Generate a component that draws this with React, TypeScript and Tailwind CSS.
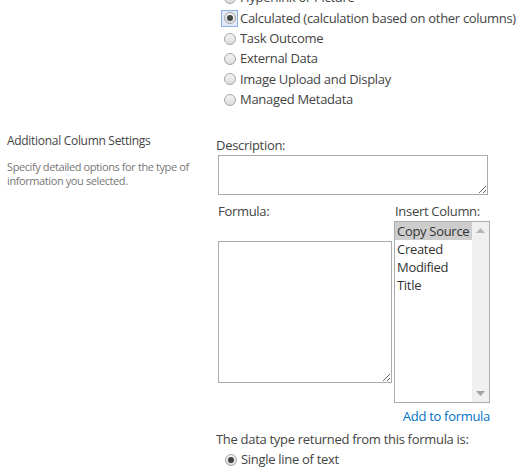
import React from 'react'

const font = { fontFamily: '"Open Sans", "Noto Sans", sans-serif' }

function Radio({ checked, focused }: { checked?: boolean; focused?: boolean }) {
  return (
    <span
      className={
        'flex h-[15px] w-[15px] shrink-0 items-center justify-center ' +
        (focused ? 'outline outline-1 outline-[#8fb0e6] bg-[#dfe9f8]' : '')
      }
    >
      <span className="flex h-[12px] w-[12px] items-center justify-center rounded-full border border-[#a6a6a6] bg-gradient-to-b from-[#f4f4f4] to-[#dcdcdc]">
        {checked && <span className="h-[6px] w-[6px] rounded-full bg-[#444]" />}
      </span>
    </span>
  )
}

function RadioRow({ label, checked, focused }: { label: string; checked?: boolean; focused?: boolean }) {
  return (
    <div className="flex h-[20.3px] items-center gap-[3px]">
      <Radio checked={checked} focused={focused} />
      <span className="whitespace-nowrap">{label}</span>
    </div>
  )
}

const types = [
  'Hyperlink or Picture',
  'Calculated (calculation based on other columns)',
  'Task Outcome',
  'External Data',
  'Image Upload and Display',
  'Managed Metadata',
]

export default function App() {
  return (
    <div style={font} className="h-[469px] w-[525px] overflow-hidden bg-white text-[13px] tracking-[-0.3px] text-[#444]">
      <div className="mt-[-12px] pl-[222px]">
        {types.map(t => (
          <RadioRow key={t} label={t} checked={t.startsWith('Calc')} focused={t.startsWith('Calc')} />
        ))}
      </div>

      <div className="mt-[22px] flex">
        <div className="w-[216px] shrink-0 pl-[7px]">
          <div className="text-[12px] leading-[18px] tracking-[-0.3px]">Additional Column Settings</div>
          <div className="mt-[10px] pr-[10px] text-[11px] leading-[14px] tracking-[-0.4px] text-[#777]">
            Specify detailed options for the type of information you selected.
          </div>
        </div>

        <div className="flex-1">
          <div className="mt-[4px] leading-[18px]">Description:</div>
          <textarea className="mt-[1px] ml-[2px] block h-[40px] w-[270px] border border-[#ababab] bg-white outline-none" />

          <div className="mt-[7px] flex">
            <div className="w-[176px] pl-[2px]">
              <div className="leading-[18px]">Formula:</div>
              <textarea className="mt-[21px] block h-[142px] w-[174px] border border-[#ababab] bg-white outline-none" />
            </div>
            <div className="ml-[2px]">
              <div className="pl-[1px] leading-[18px]">Insert Column:</div>
              <div className="mt-[1px] flex h-[182px] w-[96px] border border-[#ababab] bg-white">
                <div className="flex-1 whitespace-nowrap leading-[18px] text-[#333]">
                  <div className="bg-[#cdcdcd] pl-[2px]">Copy Source</div>
                  <div className="pl-[2px]">Created</div>
                  <div className="pl-[2px]">Modified</div>
                  <div className="pl-[2px]">Title</div>
                </div>
                <div className="flex w-[17px] shrink-0 flex-col items-center justify-between bg-[#f0f0f0] py-[6px]">
                  <svg width="9" height="5" viewBox="0 0 9 5"><path d="M4.5 0 L9 5 L0 5 Z" fill="#b5b5b5" /></svg>
                  <svg width="9" height="5" viewBox="0 0 9 5"><path d="M0 0 L9 0 L4.5 5 Z" fill="#a3a3a3" /></svg>
                </div>
              </div>
              <div className="mt-[4px] text-right leading-[18px] text-[#0072c6]">Add to formula</div>
            </div>
          </div>

          <div className="mt-[5px] leading-[18px]">The data type returned from this formula is:</div>
          <div className="mt-[2px] pl-[7px]">
            <RadioRow label="Single line of text" checked />
          </div>
        </div>
      </div>
    </div>
  )
}
